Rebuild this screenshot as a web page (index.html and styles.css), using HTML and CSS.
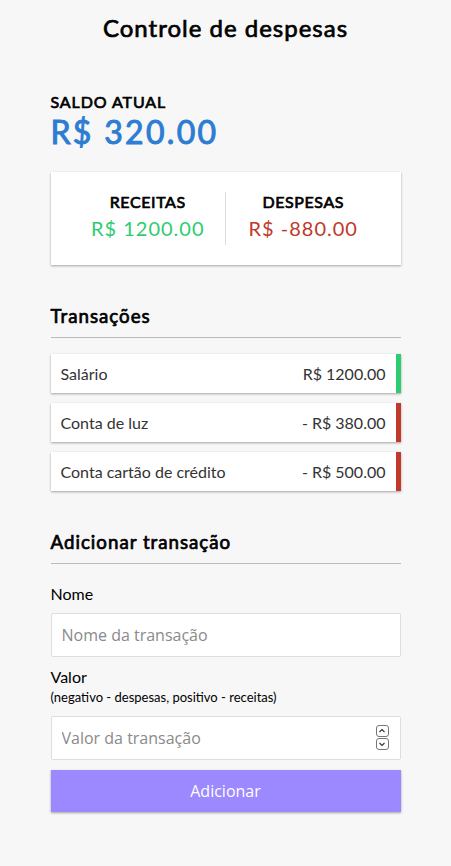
FILE: index.html
```html
<!DOCTYPE html>
<html lang="pt-BR">
<head>
<meta charset="utf-8">
<title>Controle de despesas</title>
<link rel="stylesheet" href="styles.css">
</head>
<body>
  <h2 class="title">Controle de despesas</h2>
  <div class="container">
    <h4 class="caps">Saldo atual</h4>
    <h1 class="balance">R$ 320.00</h1>

    <div class="inc-exp">
      <div class="inc-exp-col">
        <h4 class="caps">Receitas</h4>
        <p class="money plus">R$ 1200.00</p>
      </div>
      <div class="inc-exp-col">
        <h4 class="caps">Despesas</h4>
        <p class="money minus">R$ -880.00</p>
      </div>
    </div>

    <h3 class="section">Transações</h3>
    <ul class="list">
      <li class="item plus"><span>Salário</span><span>R$ 1200.00</span></li>
      <li class="item minus"><span>Conta de luz</span><span>- R$ 380.00</span></li>
      <li class="item minus"><span>Conta cartão de crédito</span><span>- R$ 500.00</span></li>
    </ul>

    <h3 class="section">Adicionar transação</h3>
    <form class="form">
      <div class="form-control">
        <label class="label" for="text">Nome</label>
        <input class="field" type="text" id="text" placeholder="Nome da transação">
      </div>
      <div class="form-control">
        <label class="label label-tall" for="amount">Valor<br><small class="hint">(negativo - despesas, positivo - receitas)</small></label>
        <div class="field-wrap">
          <input class="field" type="text" id="amount" placeholder="Valor da transação">
          <span class="spin">
            <span class="spin-btn"><svg width="8" height="6" viewBox="0 0 8 6"><path d="M1.5 4 L4 1.5 L6.5 4" fill="none" stroke="#333" stroke-width="1.1"/></svg></span>
            <span class="spin-btn"><svg width="8" height="6" viewBox="0 0 8 6"><path d="M1.5 2 L4 4.5 L6.5 2" fill="none" stroke="#333" stroke-width="1.1"/></svg></span>
          </span>
        </div>
      </div>
      <button class="btn" type="button">Adicionar</button>
    </form>
  </div>
</body>
</html>
```

FILE: styles.css
```css
* {
  box-sizing: border-box;
}

body {
  background-color: #f7f7f7;
  display: flex;
  flex-direction: column;
  align-items: center;
  margin: 0;
  font-family: "Lato", "Liberation Sans", sans-serif;
}

.title,
.caps,
.balance,
.section {
  font-weight: 400;
  -webkit-text-stroke: 0.7px currentColor;
}

.title {
  font-size: 24px;
  letter-spacing: 1px;
  margin: 13px 0 20px;
}

.container {
  margin: 30px auto;
  width: 350px;
}

.caps {
  margin: 0;
  font-size: 16px;
  letter-spacing: 0.9px;
  text-transform: uppercase;
}

.inc-exp .caps {
  letter-spacing: 0.6px;
}

.balance {
  font-size: 32px;
  letter-spacing: 2.3px;
  line-height: 41px;
  margin: 0;
  color: #2d7dd2;
  -webkit-text-stroke-width: 1px;
}

.inc-exp {
  background-color: #fff;
  box-shadow: 0 1px 3px rgba(0, 0, 0, 0.12), 0 1px 2px rgba(0, 0, 0, 0.24);
  padding: 20px;
  display: flex;
  justify-content: space-between;
  margin: 20px 0;
}

.inc-exp-col {
  flex: 1;
  text-align: center;
}

.inc-exp-col:first-of-type {
  border-right: 1px solid #dedede;
}

.money {
  font-size: 20px;
  letter-spacing: 1px;
  margin: 5px 0;
}

.money.plus {
  color: #2ecc71;
}

.money.minus {
  color: #c0392b;
}

.section {
  font-size: 18.72px;
  letter-spacing: 1px;
  border-bottom: 1px solid #bbb;
  padding-bottom: 10px;
  margin: 40px 0 10px;
}

.list {
  list-style-type: none;
  padding: 0;
  margin: 16px 0 40px;
}

.item {
  background-color: #fff;
  box-shadow: 0 1px 3px rgba(0, 0, 0, 0.12), 0 1px 2px rgba(0, 0, 0, 0.24);
  color: #333;
  display: flex;
  justify-content: space-between;
  padding: 10px;
  margin: 10px 0;
  font-size: 16px;
}

.item.plus {
  border-right: 5px solid #2ecc71;
}

.item.minus {
  border-right: 5px solid #c0392b;
}

.form {
  margin: 0;
}

.label {
  display: inline-block;
  margin: 10px 0;
  font-size: 16px;
}

.label-tall {
  margin-bottom: 11px;
}

.hint {
  font-size: 13px;
}

.field-wrap {
  position: relative;
}

.field {
  border: 1px solid #dedede;
  border-radius: 2px;
  display: block;
  font-family: "Open Sans", sans-serif;
  font-size: 16px;
  line-height: 22px;
  padding: 10px;
  width: 100%;
  background: #fff;
  color: #333;
}

.field::placeholder {
  color: #8a8a8a;
}

.spin {
  position: absolute;
  right: 12px;
  top: 9px;
  display: flex;
  flex-direction: column;
}

.spin-btn {
  width: 13px;
  height: 12px;
  border: 1px solid #777;
  border-radius: 3px;
  display: flex;
  align-items: center;
  justify-content: center;
  margin-bottom: 1px;
  background: #fff;
}

.btn {
  cursor: pointer;
  background-color: #9c88ff;
  box-shadow: 0 1px 3px rgba(0, 0, 0, 0.12), 0 1px 2px rgba(0, 0, 0, 0.24);
  color: #fff;
  border: 0;
  display: block;
  font-family: "Open Sans", sans-serif;
  font-size: 16px;
  line-height: 22px;
  margin: 10px 0 30px;
  padding: 10px;
  width: 100%;
}
```
